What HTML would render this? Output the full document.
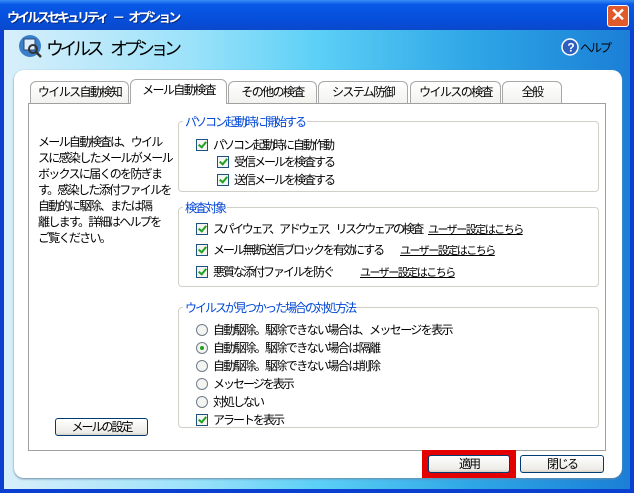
<!DOCTYPE html>
<html><head><meta charset="utf-8"><style>
*{margin:0;padding:0;box-sizing:border-box}
body{width:634px;height:493px;overflow:hidden;font-family:"Liberation Sans","Noto Sans CJK JP",sans-serif;font-size:12px;color:#000;position:relative;background:#0a3fd0;letter-spacing:-2px}
.abs{position:absolute}
.title{left:0;top:0;width:634px;height:30px;background:linear-gradient(#3a8cf5 0%,#0858e6 15%,#0550dc 60%,#0a48cc 100%);color:#fff;font-weight:bold;font-size:13px;padding:7px 0 0 7px;text-shadow:1px 1px #0a2a80;letter-spacing:-3px;white-space:pre}
.close{left:607px;top:5px;width:22px;height:22px;background:#e05a2c;border:1px solid #fff;border-radius:3px;color:#fff;font-size:18px;line-height:19px;text-align:center;font-weight:bold;letter-spacing:0}
.frame{left:4px;top:30px;width:626px;height:459px;background:linear-gradient(90deg,#d8effa 0%,#9be2fa 30%,#5cd0f6 50%,#2ea6e6 75%,#1b7fd6 100%)}
.panel{left:14px;top:70px;width:608px;height:408px;background:#fff;border-radius:10px;box-shadow:0 1px 2px #6a8aa6}
.tab{top:81px;height:22px;border:1px solid #a8a8a8;border-bottom:none;border-radius:6px 6px 0 0;background:linear-gradient(#fff,#f2f2ee);text-align:center;line-height:20px;font-size:12px;letter-spacing:-1.6px}
.content{left:28px;top:103px;width:578px;height:348px;border:1px solid #a0a0a0;background:#fff}
.grp{border:1px solid #d0d0c8;border-radius:4px}
.gt{background:#fff;color:#0046d5;padding:0 2px;font-size:12px}
.cb{display:inline-block;width:12px;height:12px;border:1px solid #1c5180;background:#f4f4f0;position:relative;vertical-align:-2px;margin-right:5px}
.cb:after{content:"";position:absolute;left:3px;top:0px;width:3px;height:6px;border:solid #21a121;border-width:0 2px 2px 0;transform:rotate(40deg)}
.rb{display:inline-block;width:12px;height:12px;border:1px solid #6e7c8c;border-radius:50%;background:#f4f4f0;vertical-align:-2px;margin-right:5px;position:relative}
.rb.on:after{content:"";position:absolute;left:3px;top:3px;width:4px;height:4px;border-radius:50%;background:#21a121}
.row{white-space:nowrap}
.lnk{color:#000;text-decoration:underline;font-size:11px;letter-spacing:-1.5px;white-space:nowrap}
.btn{border:1px solid #003c74;border-radius:3px;background:linear-gradient(#fff,#ecebe6 85%,#d6d0c5);text-align:center;font-size:12px}
.sp{display:inline-block}
</style></head><body>
<div class="abs title">ウイルスセキュリティ<span class="sp" style="width:6px"></span>－<span class="sp" style="width:6px"></span>オプション</div>
<div class="abs close">✕</div>
<div class="abs frame"></div>
<svg class="abs" style="left:18px;top:34px" width="26" height="26" viewBox="0 0 26 26"><circle cx="12" cy="12" r="11" fill="#3a7fc8"/><rect x="6" y="5" width="11" height="11" fill="#dfeefa" stroke="#2a4a80"/><circle cx="15" cy="15" r="4" fill="none" stroke="#333" stroke-width="2"/><line x1="18" y1="18" x2="23" y2="23" stroke="#333" stroke-width="2.5"/></svg>
<div class="abs" style="left:46px;top:35px;font-size:18px;letter-spacing:-4.5px;white-space:pre">ウイルス<span class="sp" style="width:10px"></span>オプション</div>
<svg class="abs" style="left:561px;top:38px" width="18" height="18"><circle cx="9" cy="9" r="8" fill="#2e5fbf" stroke="#fff" stroke-width="1.5"/><text x="9" y="13.5" font-size="12" font-weight="bold" fill="#fff" text-anchor="middle" font-family="Liberation Sans">?</text></svg>
<div class="abs" style="left:580px;top:39px;font-size:12px">ヘルプ</div>
<div class="abs panel"></div>
<div class="abs content"></div>
<div class="abs tab" style="left:30px;width:99px">ウイルス自動検知</div>
<div class="abs tab" style="left:130px;width:97px;top:79px;height:25px;background:#fff;z-index:2">メール自動検査</div>
<div class="abs tab" style="left:228px;width:89px">その他の検査</div>
<div class="abs tab" style="left:318px;width:90px">システム防御</div>
<div class="abs tab" style="left:410px;width:91px">ウイルスの検査</div>
<div class="abs tab" style="left:502px;width:60px">全般</div>
<div class="abs" style="left:38px;top:134px;line-height:16px;font-size:12px;letter-spacing:-1.7px;white-space:nowrap">メール自動検査は、ウイル<br>スに感染したメールがメール<br>ボックスに届くのを防ぎま<br>す。感染した添付ファイルを<br>自動的に駆除、または隔<br>離します。詳細はヘルプを<br>ご覧ください。</div>
<div class="abs btn" style="left:55px;top:418px;width:93px;height:18px;line-height:16px">メールの設定</div>

<div class="abs grp" style="left:178px;top:121px;width:421px;height:71px"></div>
<div class="abs gt" style="left:183px;top:113px">パソコン起動時に開始する</div>
<div class="abs row" style="left:196px;top:136px"><span class="cb"></span>パソコン起動時に自動作動</div>
<div class="abs row" style="left:217px;top:153px"><span class="cb"></span>受信メールを検査する</div>
<div class="abs row" style="left:217px;top:171px"><span class="cb"></span>送信メールを検査する</div>

<div class="abs grp" style="left:178px;top:207px;width:421px;height:80px"></div>
<div class="abs gt" style="left:183px;top:199px">検査対象</div>
<div class="abs row" style="left:196px;top:220px;letter-spacing:-2.4px"><span class="cb"></span>スパイウェア、アドウェア、リスクウェアの検査</div>
<div class="abs lnk" style="left:428px;top:221px">ユーザー設定はこちら</div>
<div class="abs row" style="left:196px;top:241px"><span class="cb"></span>メール無断送信ブロックを有効にする</div>
<div class="abs lnk" style="left:400px;top:242px">ユーザー設定はこちら</div>
<div class="abs row" style="left:196px;top:263px"><span class="cb"></span>悪質な添付ファイルを防ぐ</div>
<div class="abs lnk" style="left:360px;top:264px">ユーザー設定はこちら</div>

<div class="abs grp" style="left:178px;top:307px;width:421px;height:121px"></div>
<div class="abs gt" style="left:183px;top:299px">ウイルスが見つかった場合の対処方法</div>
<div class="abs row" style="left:196px;top:321px;letter-spacing:-1.6px"><span class="rb"></span>自動駆除。駆除できない場合は、メッセージを表示</div>
<div class="abs row" style="left:196px;top:339px;letter-spacing:-1.6px"><span class="rb on"></span>自動駆除。駆除できない場合は隔離</div>
<div class="abs row" style="left:196px;top:357px;letter-spacing:-1.6px"><span class="rb"></span>自動駆除。駆除できない場合は削除</div>
<div class="abs row" style="left:196px;top:375px"><span class="rb"></span>メッセージを表示</div>
<div class="abs row" style="left:196px;top:393px"><span class="rb"></span>対処しない</div>
<div class="abs row" style="left:196px;top:411px"><span class="cb"></span>アラートを表示</div>

<div class="abs" style="left:422px;top:450px;width:94px;height:28px;background:#e50000"></div>
<div class="abs btn" style="left:428px;top:455px;width:82px;height:18px;line-height:16px">適用</div>
<div class="abs btn" style="left:520px;top:455px;width:84px;height:18px;line-height:16px">閉じる</div>
</body></html>
